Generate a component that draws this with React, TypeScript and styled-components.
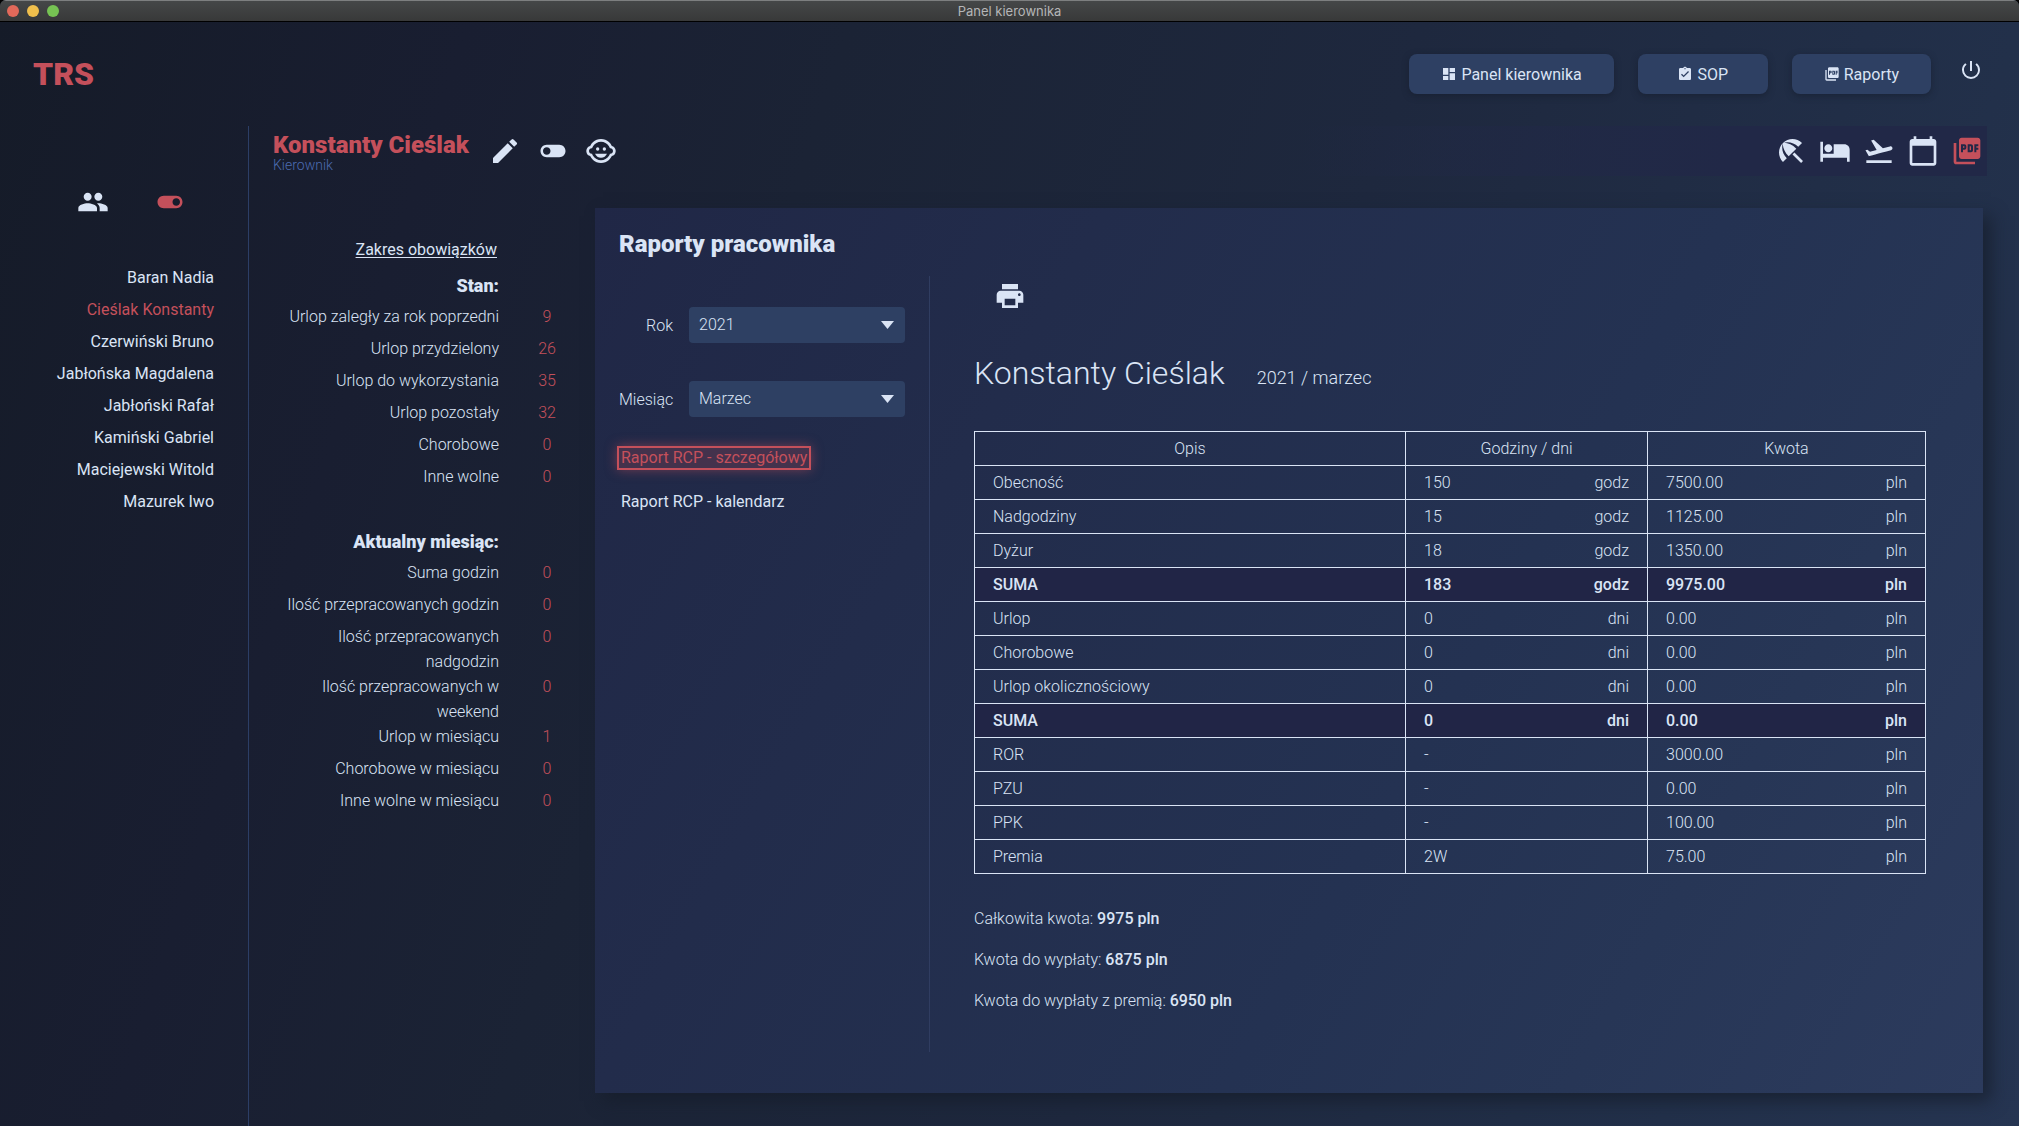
import React from "react";
import styled, { createGlobalStyle } from "styled-components";
import {
  MdAssignmentTurnedIn,
  MdBeachAccess,
  MdCalendarToday,
  MdChildCare,
  MdDashboard,
  MdEdit,
  MdFlightTakeoff,
  MdHotel,
  MdPeople,
  MdPictureAsPdf,
  MdPowerSettingsNew,
  MdPrint,
  MdToggleOff,
  MdToggleOn,
} from "react-icons/md";

const text = "#dae4f5";
const red = "#c4505b";
const blue = "#2e4063";
const navy = "#212847";

const GlobalStyle = createGlobalStyle`
  *, *::before, *::after { box-sizing: border-box; }
  html, body, #root { height: 100%; }
  body {
    margin: 0;
    background: #000;
    color: ${text};
    font: 300 16px/25px Roboto, "Noto Sans", sans-serif;
    -webkit-font-smoothing: antialiased;
  }
  button, select { font: inherit; color: inherit; }
  h1, h2, h3, p, ul, dl, dd { margin: 0; padding: 0; }
  svg { display: block; flex: none; }
`;

const Window = styled.div`
  min-height: 100%;
  display: flex;
  flex-direction: column;
  border-radius: 6px 6px 0 0;
  overflow: hidden;
  background: linear-gradient(108deg, #151b28 0%, #191e31 20%, #1b2335 36%, #1e283e 60%, #22304a 85%, #263552 100%);
`;

const TitleBar = styled.div`
  display: grid;
  grid-template-columns: 1fr auto 1fr;
  align-items: center;
  height: 22px;
  padding: 0 7px;
  background: linear-gradient(#454748, #383939);
  border-top: 1px solid #7d7f80;
  border-bottom: 1px solid #000;
  color: #b5b6b7;
  font-family: Inter, Roboto, sans-serif;
  font-size: 13px;
  font-weight: 400;
  line-height: 20px;
`;

const Lights = styled.div`
  display: flex;
  gap: 8px;
`;

const Light = styled.span<{ $color: string }>`
  width: 12px;
  height: 12px;
  border-radius: 50%;
  background: ${(p) => p.$color};
`;

const TopBar = styled.header`
  display: flex;
  align-items: center;
  justify-content: space-between;
  height: 104px;
  padding: 0 32px 0 33px;
`;

const Logo = styled.h1`
  color: ${red};
  font-size: 32px;
  font-weight: 900;
  line-height: 40px;
`;

const Nav = styled.nav`
  display: flex;
  align-items: center;
  gap: 24px;
`;

const NavButton = styled.button`
  display: flex;
  align-items: center;
  justify-content: center;
  gap: 4px;
  min-width: 130px;
  height: 40px;
  padding: 0 32px;
  border: 0;
  border-radius: 8px;
  background: ${blue};
  box-shadow: 0 2px 6px rgba(20, 26, 40, 0.5);
  font-weight: 400;
`;

const IconButton = styled.button<{ $active?: boolean }>`
  display: flex;
  align-items: center;
  justify-content: center;
  min-width: 32px;
  padding: 0;
  border: 0;
  background: none;
  color: ${(p) => (p.$active ? red : text)};
`;

const PowerButton = styled(IconButton)`
  margin-bottom: 8px;
`;

const Body = styled.div`
  flex: 1;
  display: grid;
  grid-template-columns: 249px minmax(0, 1fr);
`;

const Sidebar = styled.aside`
  padding: 60px 34px 0 0;
  border-right: 1px solid #2c3e66;
`;

const SidebarTools = styled.div`
  display: flex;
  justify-content: center;
  gap: 45px;
  padding-left: 49px;
  margin-bottom: 47px;
`;

const People = styled.ul`
  list-style: none;
  text-align: right;
  font-weight: 400;
`;

const Person = styled.li`
  height: 32px;
`;

const PersonLink = styled.a<{ $active?: boolean }>`
  color: ${(p) => (p.$active ? red : text)};
  text-decoration: none;
`;

const Main = styled.main`
  display: flex;
  flex-direction: column;
  padding: 0 32px 33px 24px;
`;

const PersonHeader = styled.div`
  display: flex;
  align-items: center;
  gap: 20px;
  height: 50px;
  padding-right: 4px;
  background: linear-gradient(90deg, rgba(33, 40, 71, 0) 60%, ${navy} 85%);
`;

const PersonTitle = styled.div`
  padding-top: 4px;
`;

const PersonName = styled.h2`
  color: ${red};
  font-size: 24px;
  font-weight: 900;
  line-height: 24px;
`;

const Role = styled.p`
  color: #4b6bb0;
  font-size: 14px;
  line-height: 16px;
`;

const Tools = styled.div<{ $gap: number }>`
  display: flex;
  align-items: center;
  gap: ${(p) => p.$gap}px;
`;

const Views = styled(Tools)`
  margin-left: auto;
`;

const Content = styled.div`
  flex: 1;
  display: grid;
  grid-template-columns: 322px minmax(0, 1fr);
  padding: 32px 4px 0 0;
`;

const Stats = styled.section`
  padding-top: 29px;
`;

const Duties = styled.a`
  display: block;
  width: 224px;
  color: ${text};
  font-weight: 400;
  text-align: right;
  text-underline-offset: 2px;
`;

const StatsTitle = styled.h3<{ $spaced?: boolean }>`
  width: 226px;
  padding-top: ${(p) => (p.$spaced ? 33 : 11)}px;
  margin-bottom: 6px;
  font-size: 18px;
  font-weight: 900;
  text-align: right;
`;

const Stat = styled.div`
  display: grid;
  grid-template-columns: 226px 96px;
  min-height: 32px;
  text-align: right;
`;

const StatValue = styled.dd`
  color: ${red};
  text-align: center;
`;

const StatName = styled.dt`
  padding-left: 10px;
`;

const Card = styled.section`
  display: flex;
  flex-direction: column;
  padding: 24px 57px 41px 24px;
  background: linear-gradient(120deg, #202746 0%, #222c4b 27%, #243252 60%, #273656 78%, #2c3b5d 100%);
  box-shadow: 8px 8px 16px rgba(22, 29, 42, 0.7);
`;

const CardTitle = styled.h2`
  margin-bottom: 20px;
  font-size: 24px;
  font-weight: 900;
  line-height: 24px;
`;

const Columns = styled.div`
  flex: 1;
  display: grid;
  grid-template-columns: 311px minmax(0, 1fr);
`;

const Filters = styled.div`
  border-right: 1px solid #303d61;
  padding-top: 31px;
`;

const Field = styled.div`
  display: grid;
  grid-template-columns: 54px 216px;
  align-items: center;
  gap: 16px;
  margin-bottom: 38px;
`;

const Label = styled.label`
  text-align: right;
`;

const SelectBox = styled.div`
  display: grid;
  align-items: center;

  & > * {
    grid-area: 1 / 1;
  }
`;

const Select = styled.select`
  width: 100%;
  height: 36px;
  padding: 0 32px 2px 10px;
  border: 0;
  border-radius: 4px;
  background: ${blue};
  appearance: none;
`;

const Arrow = styled.svg`
  justify-self: end;
  margin-right: 11px;
  pointer-events: none;
`;

const Reports = styled.ul`
  display: flex;
  flex-direction: column;
  align-items: flex-start;
  gap: 20px;
  margin: -9px 0 0 -2px;
  list-style: none;
`;

const ReportLink = styled.a<{ $active?: boolean }>`
  display: block;
  padding: 0 2px;
  border: 2px solid ${(p) => (p.$active ? red : "transparent")};
  background: ${(p) => (p.$active ? "rgba(196, 80, 91, 0.22)" : "none")};
  box-shadow: ${(p) => (p.$active ? "0 0 12px rgba(196, 80, 91, 0.5)" : "none")};
  color: ${(p) => (p.$active ? red : text)};
  font-weight: 400;
  line-height: 20px;
  text-decoration: none;
`;

const Report = styled.article`
  padding: 4px 0 0 44px;
`;

const PrintButton = styled(IconButton)`
  margin: 0 0 37px 20px;
`;

const ReportHead = styled.header`
  display: flex;
  align-items: baseline;
  gap: 32px;
  margin-bottom: 34px;
`;

const ReportName = styled.h2`
  font-size: 32px;
  font-weight: 300;
  line-height: 48px;
`;

const Period = styled.p`
  font-size: 18px;
`;

const Table = styled.table`
  width: 100%;
  table-layout: fixed;
  border-collapse: collapse;
`;

const Column = styled.col<{ $width: string }>`
  width: ${(p) => p.$width};
`;

const HeadCell = styled.th`
  height: 34px;
  padding: 0 18px;
  border: 1px solid ${text};
  font-weight: 300;
`;

const Row = styled.tr<{ $sum: boolean }>`
  background: ${(p) => (p.$sum ? "#212546" : "none")};
  font-weight: ${(p) => (p.$sum ? 500 : 300)};
`;

const Cell = styled.td`
  height: 34px;
  padding: 0 18px;
  border: 1px solid ${text};
`;

const Amount = styled.div`
  display: flex;
  justify-content: space-between;
`;

const Totals = styled.div`
  display: flex;
  flex-direction: column;
  gap: 16px;
  padding-top: 32px;
`;

const Strong = styled.strong`
  font-weight: 500;
`;

const people = [
  "Baran Nadia",
  "Cieślak Konstanty",
  "Czerwiński Bruno",
  "Jabłońska Magdalena",
  "Jabłoński Rafał",
  "Kamiński Gabriel",
  "Maciejewski Witold",
  "Mazurek Iwo",
];

const balance: [string, number][] = [
  ["Urlop zaległy za rok poprzedni", 9],
  ["Urlop przydzielony", 26],
  ["Urlop do wykorzystania", 35],
  ["Urlop pozostały", 32],
  ["Chorobowe", 0],
  ["Inne wolne", 0],
];

const month: [string, number][] = [
  ["Suma godzin", 0],
  ["Ilość przepracowanych godzin", 0],
  ["Ilość przepracowanych nadgodzin", 0],
  ["Ilość przepracowanych w weekend", 0],
  ["Urlop w miesiącu", 1],
  ["Chorobowe w miesiącu", 0],
  ["Inne wolne w miesiącu", 0],
];

const rows: [string, string, string, string][] = [
  ["Obecność", "150", "godz", "7500.00"],
  ["Nadgodziny", "15", "godz", "1125.00"],
  ["Dyżur", "18", "godz", "1350.00"],
  ["SUMA", "183", "godz", "9975.00"],
  ["Urlop", "0", "dni", "0.00"],
  ["Chorobowe", "0", "dni", "0.00"],
  ["Urlop okolicznościowy", "0", "dni", "0.00"],
  ["SUMA", "0", "dni", "0.00"],
  ["ROR", "-", "", "3000.00"],
  ["PZU", "-", "", "0.00"],
  ["PPK", "-", "", "100.00"],
  ["Premia", "2W", "", "75.00"],
];

const totals = [
  ["Całkowita kwota:", "9975 pln"],
  ["Kwota do wypłaty:", "6875 pln"],
  ["Kwota do wypłaty z premią:", "6950 pln"],
];

function StatList({ items }: { items: [string, number][] }) {
  return (
    <dl>
      {items.map(([name, value]) => (
        <Stat key={name}>
          <StatName>{name}</StatName>
          <StatValue>{value}</StatValue>
        </Stat>
      ))}
    </dl>
  );
}

function SelectField({ id, label, options }: { id: string; label: string; options: string[] }) {
  return (
    <Field>
      <Label htmlFor={id}>{label}</Label>
      <SelectBox>
        <Select id={id}>
          {options.map((o) => (
            <option key={o}>{o}</option>
          ))}
        </Select>
        <Arrow width="13" height="8" viewBox="0 0 13 8" aria-hidden="true">
          <path d="M0 0h13L6.5 8z" fill={text} />
        </Arrow>
      </SelectBox>
    </Field>
  );
}

export default function App() {
  return (
    <>
      <GlobalStyle />
      <Window>
        <TitleBar>
          <Lights>
            <Light $color="#e2695a" />
            <Light $color="#f0bf4c" />
            <Light $color="#76c353" />
          </Lights>
          <span>Panel kierownika</span>
        </TitleBar>

        <TopBar>
          <Logo>TRS</Logo>
          <Nav>
            <NavButton><MdDashboard size={16} />Panel kierownika</NavButton>
            <NavButton><MdAssignmentTurnedIn size={16} />SOP</NavButton>
            <NavButton><MdPictureAsPdf size={16} />Raporty</NavButton>
            <PowerButton aria-label="Wyloguj"><MdPowerSettingsNew size={24} /></PowerButton>
          </Nav>
        </TopBar>

        <Body>
          <Sidebar>
            <SidebarTools>
              <IconButton aria-label="Pracownicy"><MdPeople size={32} /></IconButton>
              <IconButton aria-label="Aktywni" $active><MdToggleOn size={30} /></IconButton>
            </SidebarTools>
            <People>
              {people.map((name, i) => (
                <Person key={name}>
                  <PersonLink href="#" $active={i === 1}>{name}</PersonLink>
                </Person>
              ))}
            </People>
          </Sidebar>

          <Main>
            <PersonHeader>
              <PersonTitle>
                <PersonName>Konstanty Cieślak</PersonName>
                <Role>Kierownik</Role>
              </PersonTitle>
              <Tools $gap={16}>
                <IconButton aria-label="Edytuj"><MdEdit size={32} /></IconButton>
                <IconButton aria-label="Przełącz"><MdToggleOff size={30} /></IconButton>
                <IconButton aria-label="Dzieci"><MdChildCare size={32} /></IconButton>
              </Tools>
              <Views $gap={12}>
                <IconButton aria-label="Urlop"><MdBeachAccess size={32} /></IconButton>
                <IconButton aria-label="Chorobowe"><MdHotel size={32} /></IconButton>
                <IconButton aria-label="Wyjazdy"><MdFlightTakeoff size={32} /></IconButton>
                <IconButton aria-label="Kalendarz"><MdCalendarToday size={32} /></IconButton>
                <IconButton aria-label="Raporty" $active><MdPictureAsPdf size={32} /></IconButton>
              </Views>
            </PersonHeader>

            <Content>
              <Stats>
                <Duties href="#">Zakres obowiązków</Duties>
                <StatsTitle>Stan:</StatsTitle>
                <StatList items={balance} />
                <StatsTitle $spaced>Aktualny miesiąc:</StatsTitle>
                <StatList items={month} />
              </Stats>

              <Card>
                <CardTitle>Raporty pracownika</CardTitle>
                <Columns>
                  <Filters>
                    <SelectField id="year" label="Rok" options={["2021"]} />
                    <SelectField id="month" label="Miesiąc" options={["Marzec"]} />
                    <Reports>
                      <li><ReportLink href="#" $active>Raport RCP - szczegółowy</ReportLink></li>
                      <li><ReportLink href="#">Raport RCP - kalendarz</ReportLink></li>
                    </Reports>
                  </Filters>
                  <Report>
                    <PrintButton aria-label="Drukuj"><MdPrint size={32} /></PrintButton>
                    <ReportHead>
                      <ReportName>Konstanty Cieślak</ReportName>
                      <Period>2021 / marzec</Period>
                    </ReportHead>
                    <Table>
                      <colgroup>
                        <Column $width="431px" />
                        <Column $width="242px" />
                        <Column $width="auto" />
                      </colgroup>
                      <thead>
                        <tr>
                          <HeadCell>Opis</HeadCell>
                          <HeadCell>Godziny / dni</HeadCell>
                          <HeadCell>Kwota</HeadCell>
                        </tr>
                      </thead>
                      <tbody>
                        {rows.map(([name, qty, unit, sum], i) => (
                          <Row key={i} $sum={name === "SUMA"}>
                            <Cell>{name}</Cell>
                            <Cell><Amount><span>{qty}</span><span>{unit}</span></Amount></Cell>
                            <Cell><Amount><span>{sum}</span><span>pln</span></Amount></Cell>
                          </Row>
                        ))}
                      </tbody>
                    </Table>
                    <Totals>
                      {totals.map(([name, value]) => (
                        <p key={name}>{name} <Strong>{value}</Strong></p>
                      ))}
                    </Totals>
                  </Report>
                </Columns>
              </Card>
            </Content>
          </Main>
        </Body>
      </Window>
    </>
  );
}
